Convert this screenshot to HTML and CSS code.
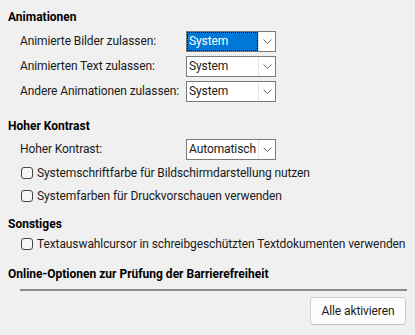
FILE: index.html
```html
<!DOCTYPE html>
<html lang="de">
<head>
  <meta charset="UTF-8" />
  <meta name="viewport" content="width=device-width,initial-scale=1.0" />
  <title>Barrierefreiheit</title>
  <link rel="stylesheet" href="styles.css">
</head>
<body>
  <div class="page">
    <div class="head">Animationen</div>
    <div class="fields">
      <span class="label">Animierte Bilder zulassen:</span>
      <div class="combo focus">
        <span class="val">System</span>
        <span class="arrow"><svg width="9" height="5" viewBox="0 0 9 5"><path d="M0.5 0.5 L4.5 4.5 L8.5 0.5" fill="none" stroke="#6d6d6d" stroke-width="1"/></svg></span>
      </div>
      <span class="label">Animierten Text zulassen:</span>
      <div class="combo">
        <span class="val">System</span>
        <span class="arrow"><svg width="9" height="5" viewBox="0 0 9 5"><path d="M0.5 0.5 L4.5 4.5 L8.5 0.5" fill="none" stroke="#6d6d6d" stroke-width="1"/></svg></span>
      </div>
      <span class="label">Andere Animationen zulassen:</span>
      <div class="combo">
        <span class="val">System</span>
        <span class="arrow"><svg width="9" height="5" viewBox="0 0 9 5"><path d="M0.5 0.5 L4.5 4.5 L8.5 0.5" fill="none" stroke="#6d6d6d" stroke-width="1"/></svg></span>
      </div>
    </div>

    <div class="head head-2">Hoher Kontrast</div>
    <div class="fields fields-2">
      <span class="label">Hoher Kontrast:</span>
      <div class="combo">
        <span class="val">Automatisch</span>
        <span class="arrow"><svg width="9" height="5" viewBox="0 0 9 5"><path d="M0.5 0.5 L4.5 4.5 L8.5 0.5" fill="none" stroke="#6d6d6d" stroke-width="1"/></svg></span>
      </div>
    </div>
    <div class="checks">
      <label class="check"><span class="box"></span>Systemschriftfarbe für Bildschirmdarstellung nutzen</label>
      <label class="check"><span class="box"></span>Systemfarben für Druckvorschauen verwenden</label>
    </div>

    <div class="head head-3">Sonstiges</div>
    <div class="checks checks-3">
      <label class="check"><span class="box"></span>Textauswahlcursor in schreibgeschützten Textdokumenten verwenden</label>
    </div>

    <div class="head head-4">Online-Optionen zur Prüfung der Barrierefreiheit</div>
    <div class="rule"></div>
    <div class="actions">
      <button class="btn">Alle aktivieren</button>
    </div>
  </div>
</body>
</html>
```

FILE: styles.css
```css
* { margin: 0; padding: 0; box-sizing: border-box; }
body {
  background: #f0f0f0;
  font-family: Roboto, "Liberation Sans", sans-serif;
  font-size: 12px;
  letter-spacing: -0.1px;
  color: #1a1a1a;
}
.page {
  padding: 9px 8px 0 8px;
  display: flex;
  flex-direction: column;
}
.head {
  font-weight: 700;
  line-height: 16px;
  height: 16px;
  letter-spacing: 0;
  color: #000;
}
.head-2 { margin-top: 16px; }
.head-3 { margin-top: 10px; }
.head-4 { margin-top: 12px; }

.fields {
  margin-top: 6px;
  padding-left: 12px;
  display: grid;
  grid-template-columns: 166px 90px;
  grid-auto-rows: 21px;
  row-gap: 4px;
  align-items: center;
}
.fields-2 { margin-top: 5px; }
.label { line-height: 21px; white-space: nowrap; }

.combo {
  height: 21px;
  display: flex;
  border: 1px solid #7a7a7a;
  background: #fff;
}
.val {
  flex: 1;
  padding-left: 2px;
  line-height: 19px;
  white-space: nowrap;
  overflow: hidden;
}
.combo.focus .val {
  background: #0078d7;
  color: #fff;
  outline: 1px dotted #000;
  outline-offset: -1px;
}
.arrow {
  flex: none;
  width: 17px;
  border-left: 1px solid #e3e3e3;
  display: flex;
  align-items: center;
  justify-content: center;
}

.checks {
  margin-top: 3px;
  padding-left: 13px;
  display: flex;
  flex-direction: column;
  gap: 3px;
}
.checks-3 { margin-top: 2px; }
.check {
  display: flex;
  align-items: center;
  gap: 4px;
  height: 20px;
  white-space: nowrap;
}
.box {
  flex: none;
  width: 12px;
  height: 12px;
  border: 1px solid #444;
  border-radius: 3px;
  background: #f6f6f6;
}

.rule {
  margin: 7px 0 0 12px;
  height: 2px;
  background: #8a8a8a;
}
.actions {
  margin-top: 6px;
  display: flex;
  justify-content: flex-end;
  padding-right: 1px;
}
.btn {
  width: 96px;
  height: 28px;
  background: #fdfdfd;
  border: 1px solid #d0d0d0;
  border-bottom-color: #bcbcbc;
  border-radius: 4px;
  font-family: inherit;
  font-size: 12px;
  letter-spacing: -0.1px;
  color: #1a1a1a;
}
```
